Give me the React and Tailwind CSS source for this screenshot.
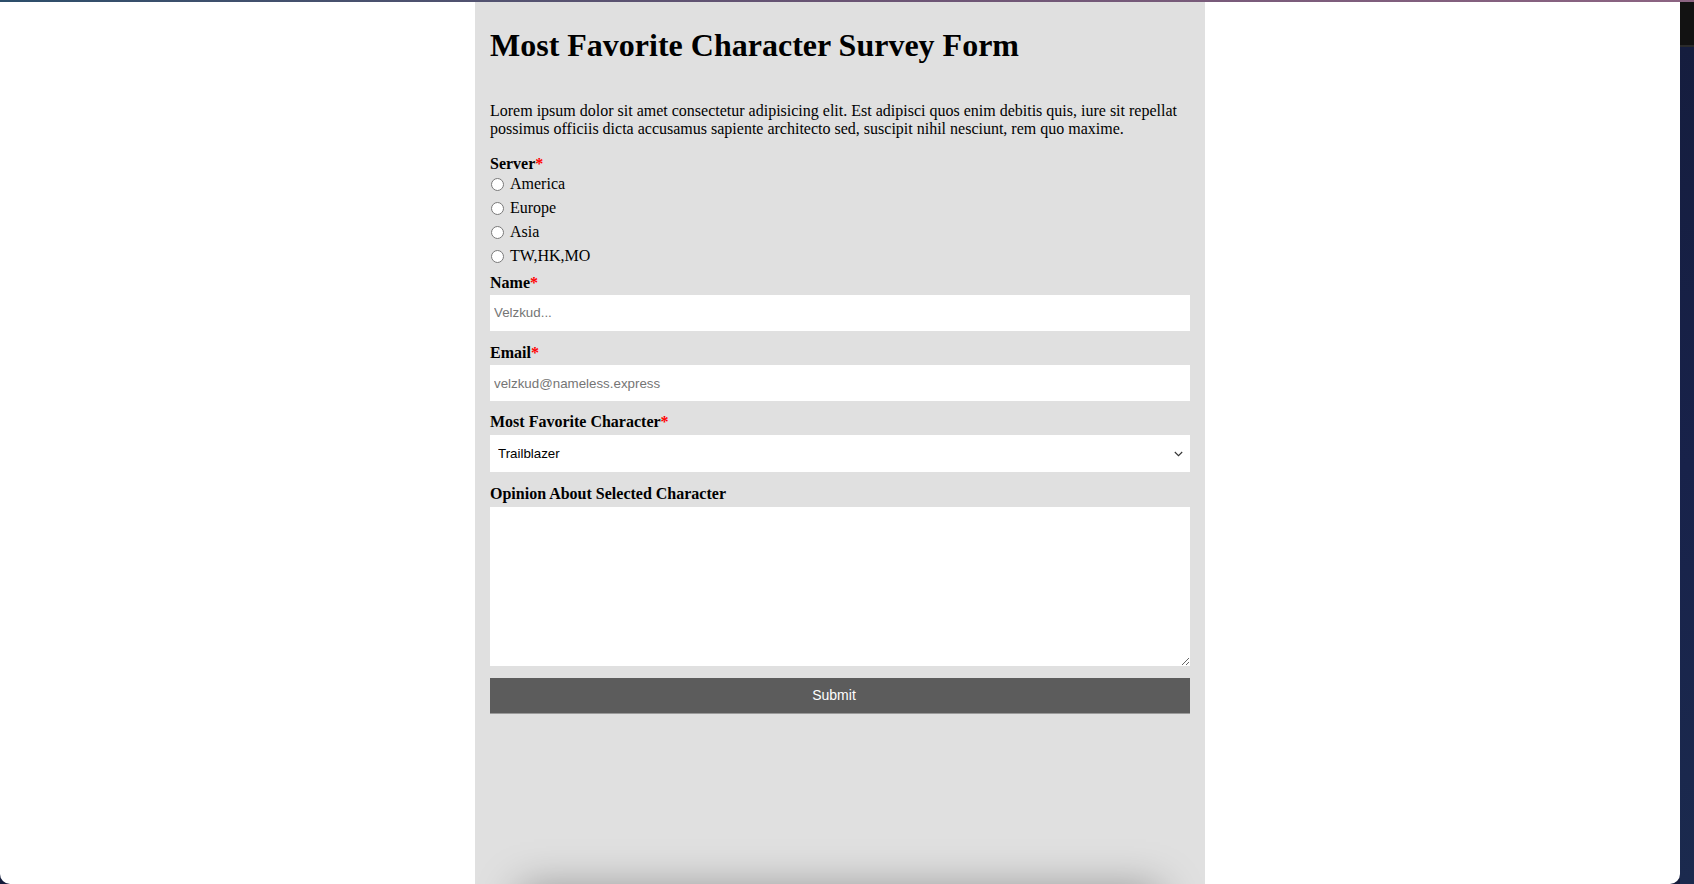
import React, { useState } from 'react';

const serif = { fontFamily: '"Liberation Serif", "Times New Roman", serif' };

const Required = () => <span className="text-[#ff0000]">*</span>;

const servers = ['America', 'Europe', 'Asia', 'TW,HK,MO'];

const App = () => {
    const [server, setServer] = useState('');
    const [character, setCharacter] = useState('Trailblazer');

    return (
        <div className="h-[884px] w-full overflow-hidden bg-[#141c3b] flex flex-col">
            <div className="h-[2px] w-full shrink-0 bg-gradient-to-r from-[#2c4e6a] via-[#6a5474] to-[#8c6482]"></div>
            <div className="flex flex-1 min-h-0">
                <div className="w-[1680px] h-full bg-white rounded-b-[10px] overflow-hidden">
                    <div
                        className="w-[730px] h-full mx-auto bg-[#e0e0e0] px-[15px] pt-[25px] flex flex-col text-black"
                        style={serif}
                    >
                        <h1 className="text-[32px] font-bold leading-[37px]">Most Favorite Character Survey Form</h1>
                        <p className="mt-[38px] text-[16px] leading-[18.4px]">
                            Lorem ipsum dolor sit amet consectetur adipisicing elit. Est adipisci quos enim debitis quis, iure sit repellat possimus officiis dicta accusamus sapiente architecto sed, suscipit nihil nesciunt, rem quo maxime.
                        </p>

                        <form className="mt-[16px] flex flex-col" onSubmit={e => e.preventDefault()}>
                            <label className="text-[16px] font-bold leading-[18.4px]">Server<Required /></label>
                            <div className="-mt-[1px] flex flex-col">
                                {servers.map(s => (
                                    <label key={s} className="h-[24px] flex items-center text-[16px]">
                                        <input
                                            type="radio"
                                            name="server"
                                            value={s}
                                            checked={server === s}
                                            onChange={() => setServer(s)}
                                            className="w-[13px] h-[13px] m-0 ml-[1px] mr-[6px]"
                                        />
                                        <span>{s}</span>
                                    </label>
                                ))}
                            </div>

                            <label className="mt-[6px] text-[16px] font-bold leading-[18.4px]">Name<Required /></label>
                            <input
                                type="text"
                                placeholder="Velzkud..."
                                className="mt-[2px] w-full h-[36px] bg-white px-[4px] text-[13.33px] font-['Liberation_Sans',Arial,sans-serif] placeholder:text-[#757575] outline-none"
                            />

                            <label className="mt-[13px] text-[16px] font-bold leading-[18.4px]">Email<Required /></label>
                            <input
                                type="email"
                                placeholder="velzkud@nameless.express"
                                className="mt-[3px] w-full h-[36px] bg-white px-[4px] text-[13.33px] font-['Liberation_Sans',Arial,sans-serif] placeholder:text-[#757575] outline-none"
                            />

                            <label className="mt-[12px] text-[16px] font-bold leading-[18.4px]">Most Favorite Character<Required /></label>
                            <div className="relative mt-[4px]">
                                <select
                                    value={character}
                                    onChange={e => setCharacter(e.target.value)}
                                    className="appearance-none w-full h-[37px] bg-white pl-[8px] text-[13.33px] text-black font-['Liberation_Sans',Arial,sans-serif] outline-none"
                                >
                                    <option>Trailblazer</option>
                                    <option>March 7th</option>
                                    <option>Dan Heng</option>
                                    <option>Himeko</option>
                                    <option>Welt</option>
                                </select>
                                <svg className="absolute right-[7px] top-[16px] pointer-events-none" width="9" height="6" viewBox="0 0 9 6" fill="none">
                                    <path d="M0.8 1 L4.5 4.7 L8.2 1" stroke="#333" strokeWidth="1.1" />
                                </svg>
                            </div>

                            <label className="mt-[13px] text-[16px] font-bold leading-[18.4px]">Opinion About Selected Character</label>
                            <textarea className="mt-[3px] w-full h-[159px] bg-white p-[4px] text-[13.33px] font-['Liberation_Sans',Arial,sans-serif] outline-none"></textarea>

                            <button
                                type="submit"
                                className="mt-[12px] w-full h-[36px] bg-[#5c5c5c] border-b border-[#9a9a9a] pr-[12px] text-white text-[14px] font-['Liberation_Sans',Arial,sans-serif]"
                            >
                                Submit
                            </button>
                        </form>

                        <div className="mt-[180px] w-[640px] h-[200px] mx-auto shrink-0 bg-[#e0e0e0] shadow-[0_-6px_40px_rgba(0,0,0,0.35)]"></div>
                    </div>
                </div>
                <div className="flex-1 flex flex-col">
                    <div className="h-[45px] bg-[#121212] border-b-2 border-[#2a2a2a]"></div>
                    <div className="flex-1 bg-gradient-to-b from-[#151d3e] via-[#18224a] to-[#1b2a4e]"></div>
                </div>
            </div>
        </div>
    );
};

export default App;
